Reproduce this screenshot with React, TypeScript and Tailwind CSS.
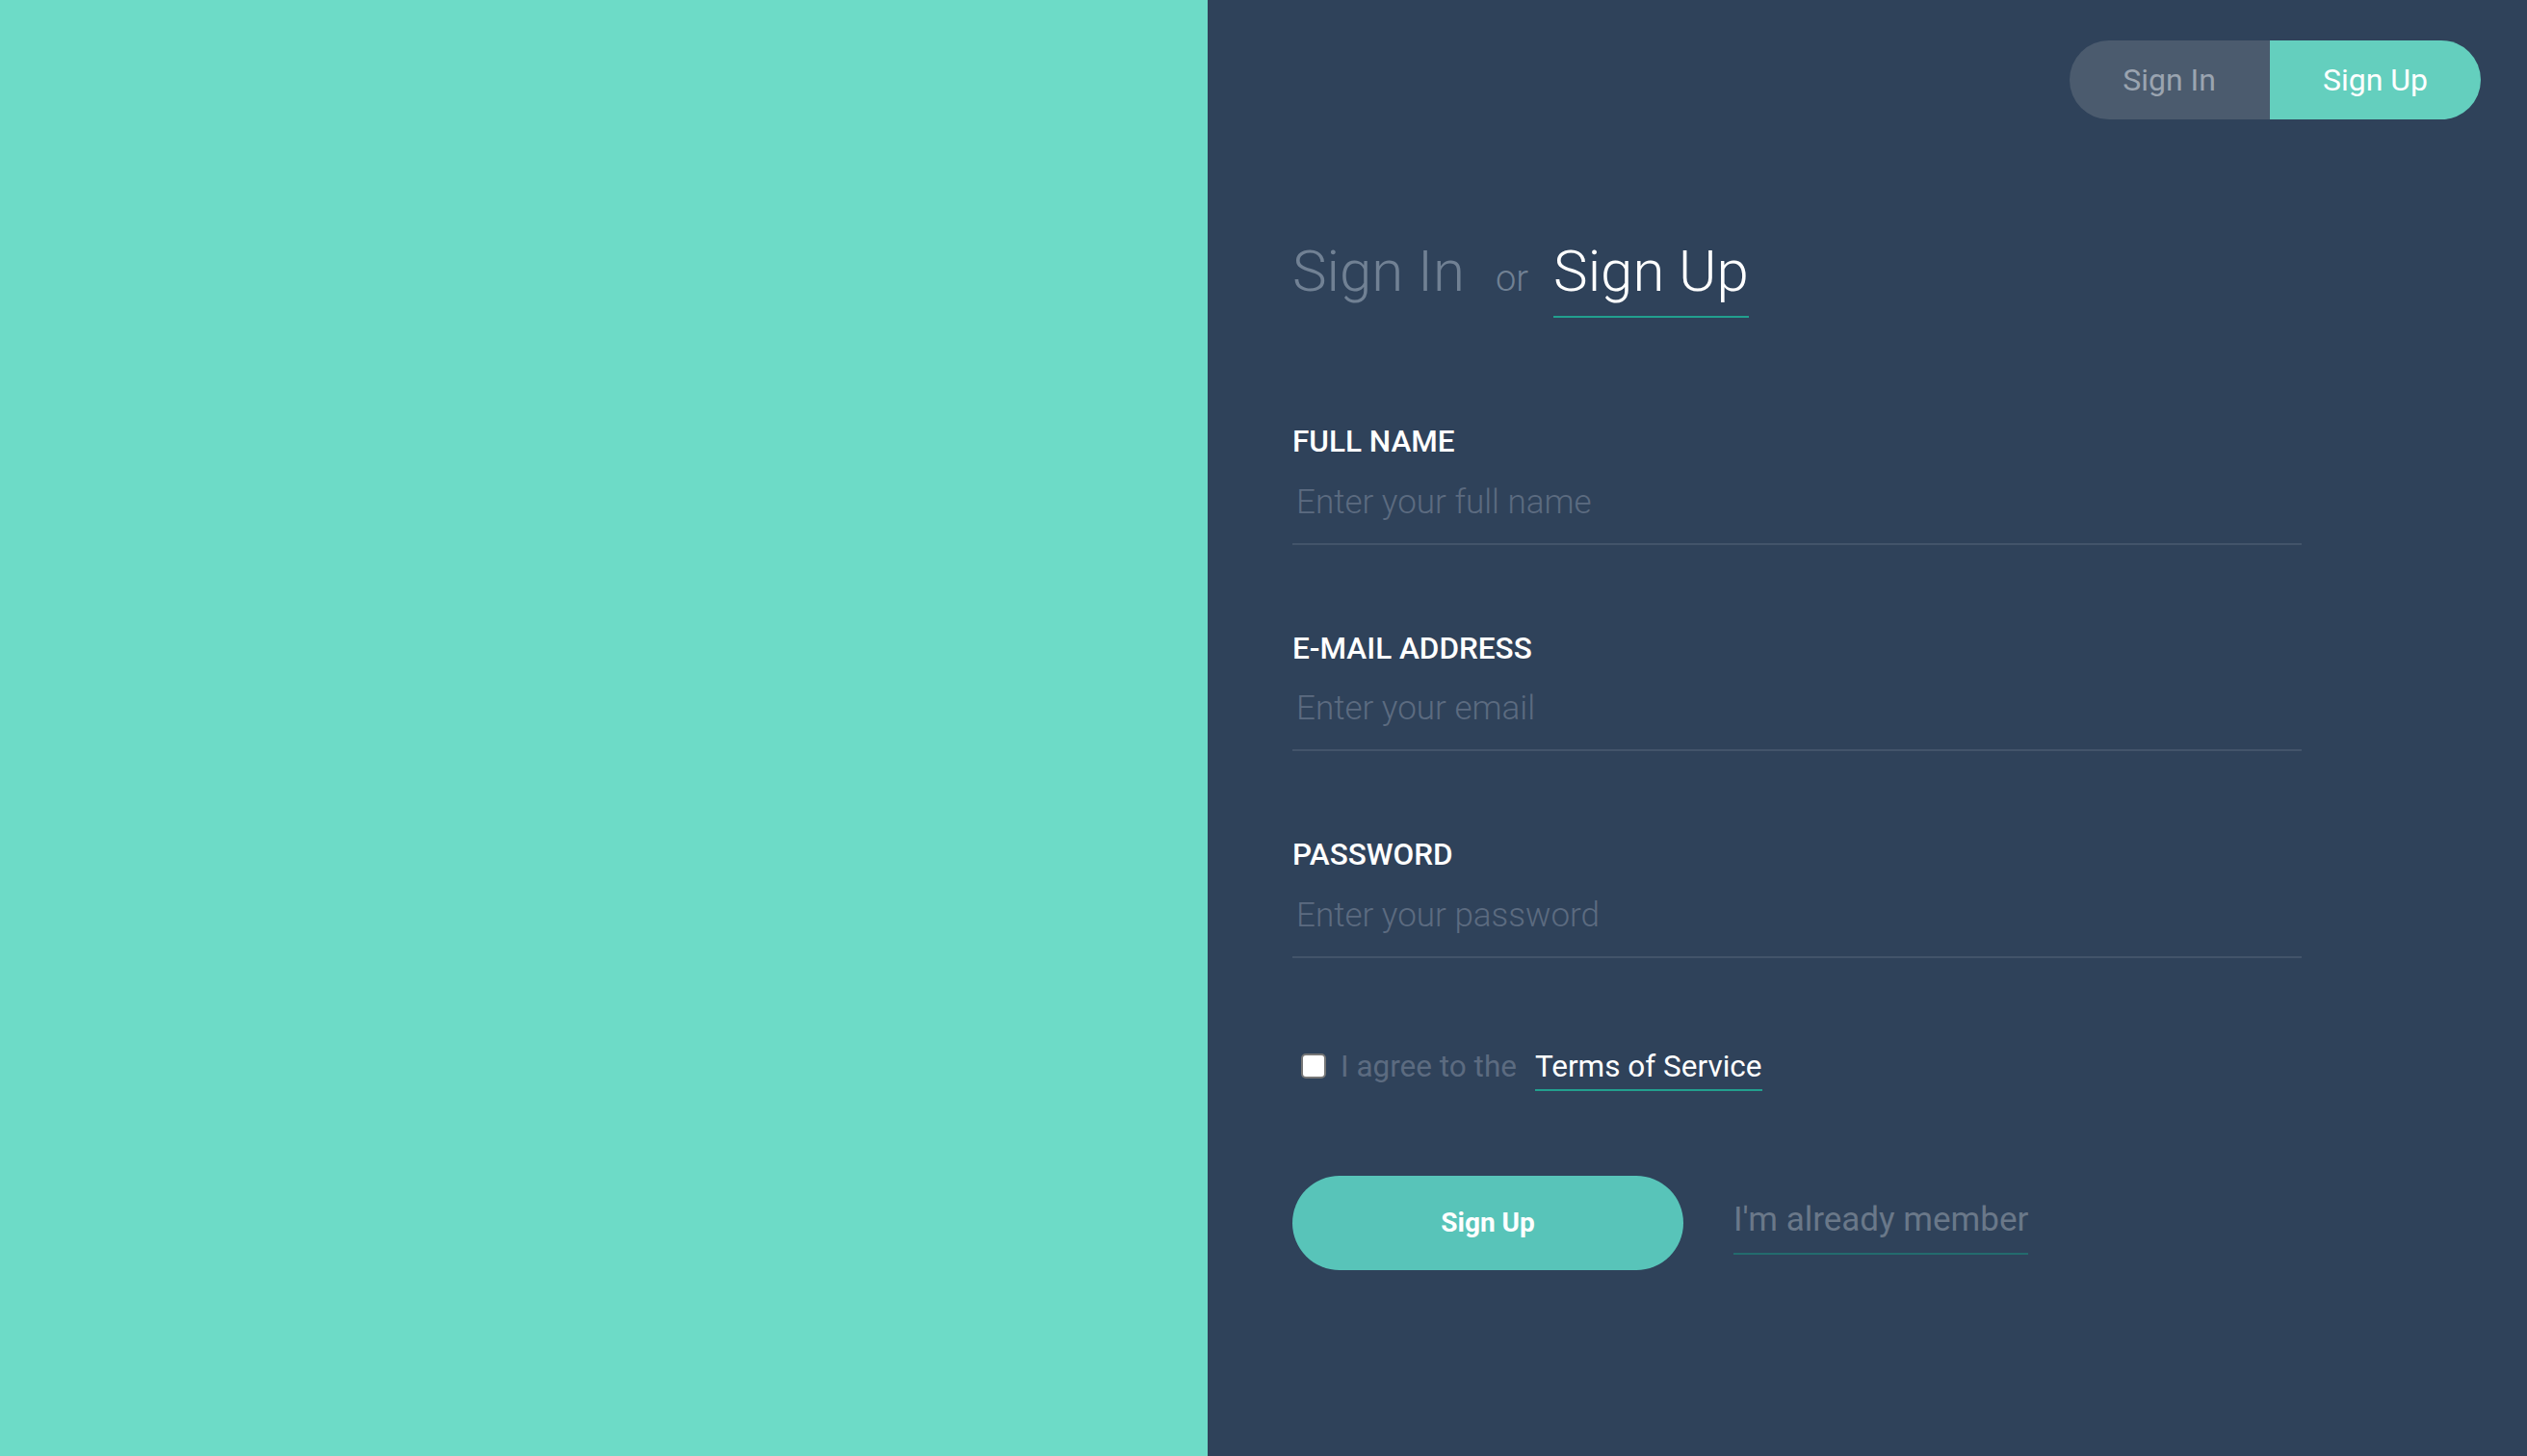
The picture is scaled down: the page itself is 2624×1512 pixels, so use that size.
import { useState } from "react";

type FieldProps = {
  label: string;
  type: string;
  placeholder: string;
};

const Field = ({ label, type, placeholder }: FieldProps) => (
  <div className="flex flex-col">
    <label className="text-[31.5px] leading-none font-medium text-white">{label}</label>
    <input
      type={type}
      placeholder={placeholder}
      className="mt-1 h-[87px] w-full border-b-2 border-[#43546a] bg-transparent pl-1 text-[35px] font-light text-white outline-none placeholder:text-[#5c6b80]"
    />
  </div>
);

const App = () => {
  const [mode, setMode] = useState<"in" | "up">("up");
  const [agree, setAgree] = useState(false);

  return (
    <div className="flex h-screen w-full font-['Roboto',sans-serif]">
      <div className="w-[1254px] shrink-0 bg-[#6ddbc7]" />

      <div className="flex flex-1 flex-col bg-[#2f425a] pl-[88px] pr-[48px] pt-[42px]">
        {/* top switch */}
        <div className="flex justify-end">
          <div className="flex h-[82px]">
            <button
              onClick={() => setMode("in")}
              className={`rounded-l-full pl-[55px] pr-[56px] text-[32px] ${
                mode === "in" ? "bg-[#64cfbe] text-white" : "bg-[#4b5b6e] text-[#9aa4b0]"
              }`}
            >
              Sign In
            </button>
            <button
              onClick={() => setMode("up")}
              className={`rounded-r-full px-[55px] text-[32px] ${
                mode === "up" ? "bg-[#64cfbe] text-white" : "bg-[#4b5b6e] text-[#9aa4b0]"
              }`}
            >
              Sign Up
            </button>
          </div>
        </div>

        <div className="mt-[128px] w-[1048px]">
          <div className="flex items-baseline">
            <span className="text-[60px] leading-none font-light text-[#718194]">Sign In</span>
            <span className="ml-[32px] text-[38px] leading-none font-light text-[#718194]">or</span>
            <span className="ml-[26px] border-b-2 border-[#22a08e] pb-[16px] text-[60px] leading-none font-light text-white">
              Sign Up
            </span>
          </div>

          <div className="mt-[113px] flex flex-col gap-[92px]">
            <Field label="FULL NAME" type="text" placeholder="Enter your full name" />
            <Field label="E-MAIL ADDRESS" type="email" placeholder="Enter your email" />
            <Field label="PASSWORD" type="password" placeholder="Enter your password" />
          </div>

          <div className="mt-[97px] flex items-start">
            <input
              type="checkbox"
              checked={agree}
              onChange={() => setAgree(!agree)}
              className="ml-[9px] mt-[2px] h-[26px] w-[26px] appearance-none rounded-[5px] border-2 border-[#767676] bg-white checked:bg-[#58c4b9]"
            />
            <span className="ml-[15px] text-[31.5px] leading-none text-[#5c6b80]">I agree to the</span>
            <a className="ml-[19px] border-b-2 border-[#22a08e] pb-2 text-[31.5px] leading-none text-white">
              Terms of Service
            </a>
          </div>

          <div className="mt-[88px] flex items-start">
            <button className="h-[98px] w-[406px] rounded-full bg-[#58c4b9] text-[28px] font-bold text-white">
              Sign Up
            </button>
            <a className="ml-[52px] mt-[28px] border-b-2 border-[#236b6d] pb-[17px] text-[35px] leading-none text-[#6a7889]">
              I'm already member
            </a>
          </div>
        </div>
      </div>
    </div>
  );
};

export default App;
